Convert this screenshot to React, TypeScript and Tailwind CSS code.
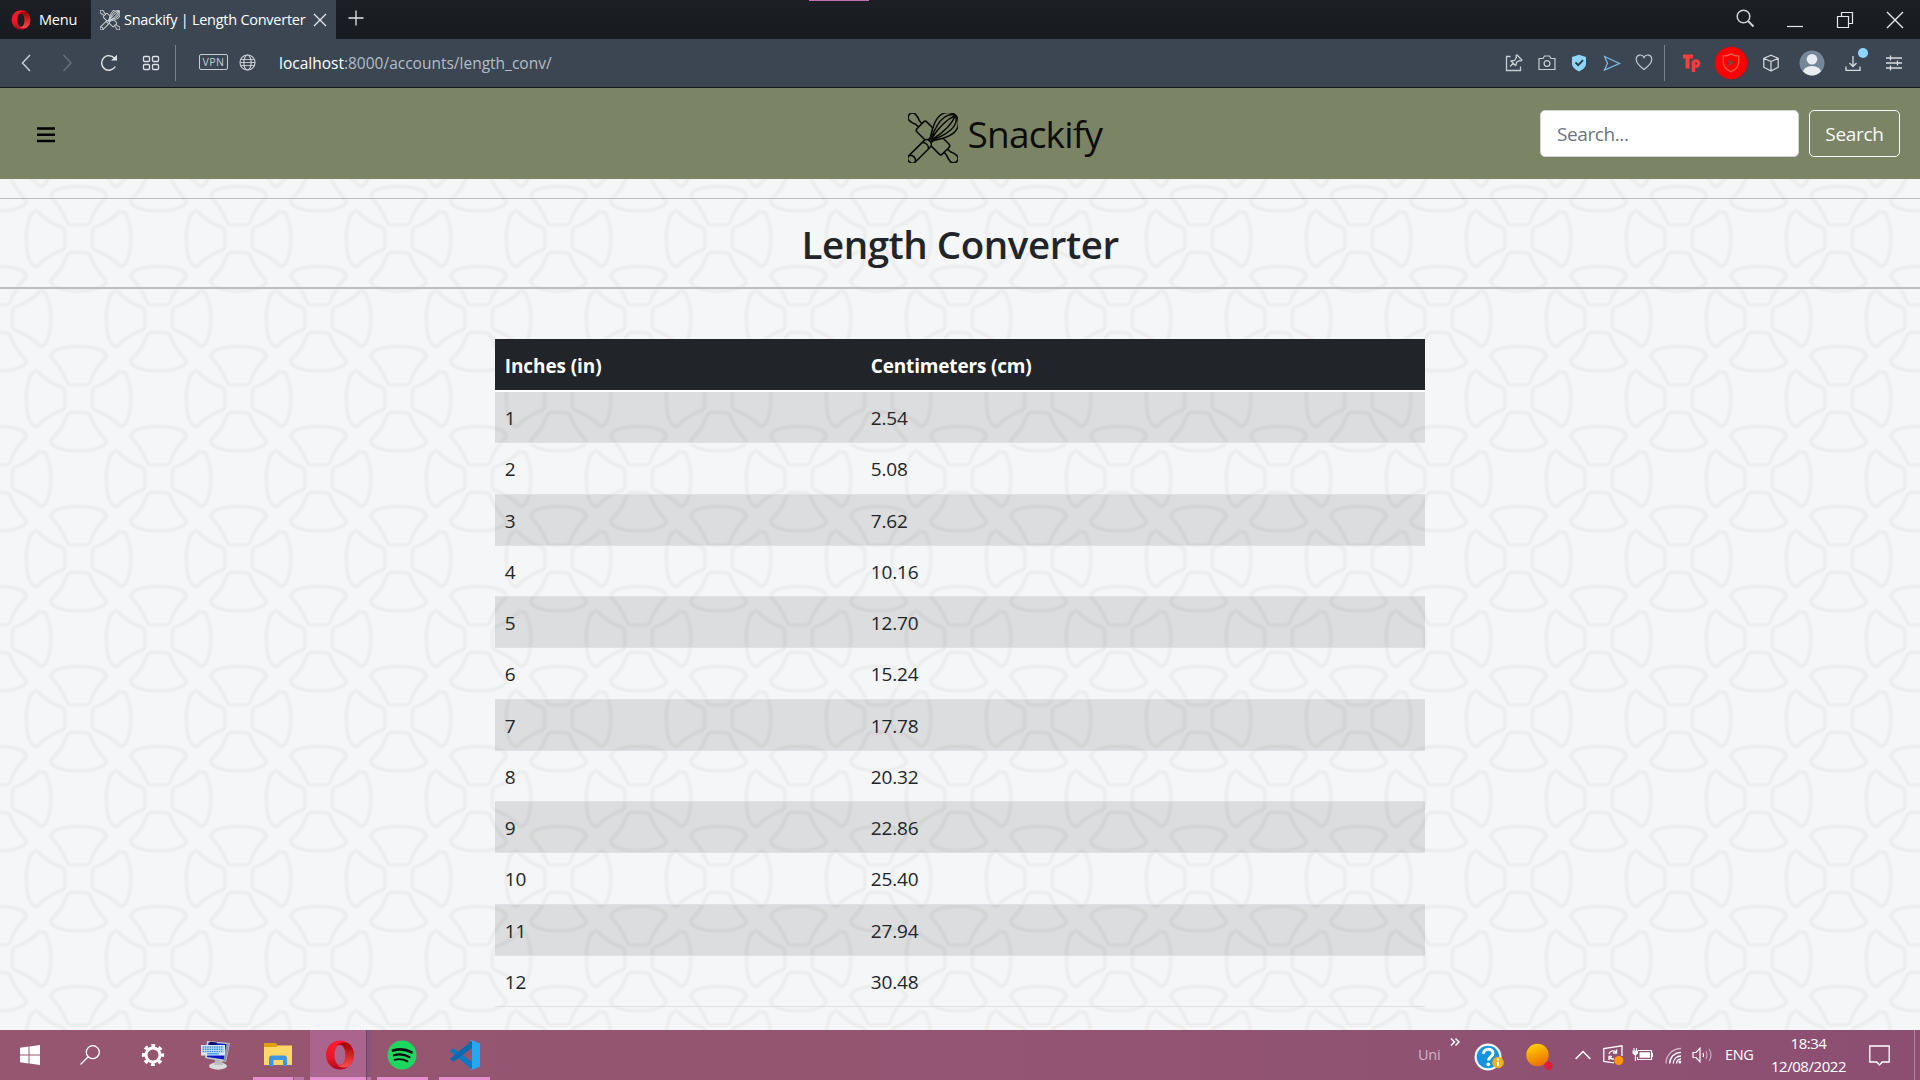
import React from "react";

const rows: [string, string][] = [
  ["1", "2.54"],
  ["2", "5.08"],
  ["3", "7.62"],
  ["4", "10.16"],
  ["5", "12.70"],
  ["6", "15.24"],
  ["7", "17.78"],
  ["8", "20.32"],
  ["9", "22.86"],
  ["10", "25.40"],
  ["11", "27.94"],
  ["12", "30.48"],
];

function Logo({ className, cover, stroke }: { className: string; cover: string; stroke: number }) {
  return (
    <svg viewBox="0 0 50 50" className={className} fill={cover} stroke="currentColor" strokeWidth={stroke} strokeLinejoin="round" strokeLinecap="round">
      <g transform="rotate(45 25 25)">
        <path d="M7 22.8 L3 22.4 C0 21 -2 20.6 -4 20.6 a4.4 4.4 0 0 0 0 8.8 C-2 29.4 0 29 3 27.6 L7 27.2" />
        <path d="M43 22.8 L47 22.4 C50 21 52 20.6 54 20.6 a4.4 4.4 0 0 1 0 8.8 C52 29.4 50 29 47 27.6 L43 27.2" />
        <rect x="7" y="18" width="36" height="14" rx="2.5" />
      </g>
      <g transform="rotate(-45 25 25)">
        <path d="M22.500 23.500 C29 19.500 36 14 44 14 C52 14 57 19.500 57 25 C57 30.500 52 36 44 36 C36 36 29 30.500 22.500 26.500 Z" />
        <path d="M22.500 24 C32 20 41 16.800 48 18.400 C53 19.600 56 22.500 56.500 25 M22.500 26 C32 30 41 33.200 48 31.600 C53 30.400 56 27.500 56.500 25 M22.500 24.600 C34 22 47 20.700 56.500 25 M22.500 25.400 C34 28 47 29.300 56.500 25" fill="none" />
        <rect x="-8.500" y="20.500" width="29" height="9" rx="4" />
        <path d="M20.500 23h4v4h-4M-4 20.800c3 2 3 6.400 0 8.400M14.500 20.800c2.200 2.400 2.200 6 0 8.400" fill="none" />
      </g>
    </svg>
  );
}

function OperaMark({ className, id }: { className: string; id: string }) {
  return (
    <svg viewBox="0 0 30 30" className={className}>
      <defs>
        <linearGradient id={id + "a"} x1="0" y1="0" x2="0" y2="1">
          <stop offset="0" stopColor="#ff1b2d" />
          <stop offset="0.6" stopColor="#ed1528" />
          <stop offset="1" stopColor="#b0071b" />
        </linearGradient>
        <linearGradient id={id + "b"} x1="0" y1="0" x2="0" y2="1">
          <stop offset="0" stopColor="#9c0000" />
          <stop offset="1" stopColor="#ff4b4b" />
        </linearGradient>
      </defs>
      <path fillRule="evenodd" fill={`url(#${id}a)`} d="M15 .5C7 .5 1 6.800 1 15s6 14.500 14 14.500S29 23.200 29 15 23 .5 15 .5Zm0 4.500c3.400 0 5.500 4.400 5.500 10S18.400 25 15 25 9.500 20.600 9.500 15 11.600 5 15 5Z" />
      <path fill={`url(#${id}b)`} d="M11.500 5.200C14.500 2.500 19 2 23.300 3.200 27 6 29 10.300 29 15s-2 9-5.700 11.800c-4.300 1.200-8.800.7-11.800-2 1 .5 2.200.7 3.500.5 3.400-.2 5.600-4.700 5.600-10.300S18.400 4.900 15 4.700c-1.300-.2-2.500 0-3.500.5Z" />
    </svg>
  );
}

function TabBar() {
  return (
    <div className="relative flex h-[39px] items-stretch bg-linear-to-b from-[#1c2024] to-[#171a1e] text-white">
      <div className="absolute top-0 left-[809px] h-px w-[60px] bg-[#c06fae]" />
      <div className="flex w-[91px] items-center pl-[11px]">
        <OperaMark id="menu" className="h-5 w-5" />
        <span className="ml-2 pt-px text-[14.5px] tracking-[-0.2px]">Menu</span>
      </div>
      <div className="flex w-[245px] items-center bg-[#3b4652] pl-[9px]">
        <Logo className="h-5 w-5 text-[#c9ced3]" cover="#3b4652" stroke={2.4} />
        <span className="ml-[4px] w-[182px] text-[14.500px] tracking-[-0.260px] whitespace-nowrap">Snackify | Length Converter</span>
        <svg viewBox="0 0 14 14" className="ml-[7px] h-[14px] w-[14px]" stroke="#e6e8ea" strokeWidth="1.3"><path d="M1 1l12 12M13 1L1 13" /></svg>
      </div>
      <svg viewBox="0 0 16 16" className="mt-[10px] ml-[12px] h-4 w-4" stroke="#e6e8ea" strokeWidth="1.3"><path d="M8 0.500v15M.5 8h15" /></svg>
      <div className="ml-auto flex items-center pr-[16px]">
        <svg viewBox="0 0 20 20" className="mb-[1px] h-5 w-5" fill="none" stroke="#d0d3d6" strokeWidth="1.500"><circle cx="8.500" cy="7.500" r="6.300" /><path d="M13 12l5.500 5.500" strokeWidth="2" /></svg>
        <svg viewBox="0 0 16 16" className="ml-[32px] h-4 w-4" stroke="#e6e8ea" strokeWidth="1.200"><path d="M0 14.500h16" /></svg>
        <svg viewBox="0 0 18 18" className="ml-[33px] h-[18px] w-[18px]" fill="none" stroke="#e6e8ea" strokeWidth="1.200"><path d="M1.500 5.500h11v11h-11zM5.500 5.500v-4h11v11h-4" /></svg>
        <svg viewBox="0 0 18 18" className="ml-[32px] h-[18px] w-[18px]" stroke="#e6e8ea" strokeWidth="1.400"><path d="M1 1l16 16M17 1L1 17" /></svg>
      </div>
    </div>
  );
}

function AddressBar() {
  return (
    <div className="flex h-[49px] items-center border-b border-[#15181c] bg-[#3b4652] text-[#c6cdd3]">
      <svg viewBox="0 0 16 18" className="ml-[18px] h-[18px] w-4" fill="none" stroke="currentColor" strokeWidth="1.500"><path d="M12 1L4.500 9l7.500 8" /></svg>
      <svg viewBox="0 0 16 18" className="ml-[25px] h-[18px] w-4 text-[#66717c]" fill="none" stroke="currentColor" strokeWidth="1.500"><path d="M4.500 1L12 9l-7.500 8" /></svg>
      <svg viewBox="0 0 18 18" className="ml-[25px] h-[18px] w-[18px]" fill="none" stroke="#dde1e5" strokeWidth="1.500"><path d="M15.300 12.500A7.300 7.300 0 1 1 14.500 4.200" /><path d="M11 6.500h6V.8z" fill="#dde1e5" stroke="none" /></svg>
      <svg viewBox="0 0 18 18" className="ml-[24px] h-[18px] w-[18px]" fill="none" stroke="#dde1e5" strokeWidth="1.300"><rect x="1.500" y="2.500" width="6" height="5" rx="1" /><rect x="10.500" y="2.500" width="6" height="5" rx="1" /><rect x="1.500" y="10.500" width="6" height="5" rx="1" /><rect x="10.500" y="10.500" width="6" height="5" rx="1" /></svg>
      <div className="ml-[15px] h-9 w-px bg-[#76818b]" />
      <div className="mb-[2px] ml-[23px] flex h-4 w-[29px] items-center justify-center rounded-[2px] border border-[#c6cdd3] text-[10.500px] leading-none tracking-[0.5px]">VPN</div>
      <svg viewBox="0 0 17 17" className="mb-[2px] ml-[11px] h-[17px] w-[17px]" fill="none" stroke="currentColor" strokeWidth="1.200"><circle cx="8.500" cy="8.500" r="7.500" /><ellipse cx="8.500" cy="8.500" rx="3.700" ry="7.500" /><path d="M2 5.500h13M2 11.500h13M1 8.500h15" strokeWidth="0.9" /></svg>
      <div className="ml-[23px] pt-[2px] text-[15.500px] text-[#b4bdc6]"><span className="text-white">localhost</span>:8000/accounts/length_conv/</div>

      <div className="ml-auto flex items-center pr-[17px]">
        <svg viewBox="0 0 18 18" className="h-[18px] w-[18px]" fill="none" stroke="currentColor" strokeWidth="1.300"><path d="M5.500 2.500h-4v14h14v-4M5 12.500l3.500-3.500M5.500 6.500l5.500 5.500M6.500 7l3-.5 2-3L11 2l1-1 5 5-1 1-1.500-.5-3 2-.5 3" /></svg>
        <svg viewBox="0 0 18 18" className="ml-[15px] h-[18px] w-[18px]" fill="none" stroke="currentColor" strokeWidth="1.200"><path d="M1 4.500h4l1.500-2.500h5L13 4.500h4v11H1z" /><circle cx="9" cy="9.500" r="2.900" /></svg>
        <svg viewBox="0 0 16 18" className="ml-[15px] h-[18px] w-4"><path d="M8 .7L15 3v6.500c0 4-3.500 6.300-7 8-3.500-1.700-7-4-7-8V3z" fill="#8fd6ff" /><path d="M4.500 8.500l2.700 2.700 4.800-5" fill="none" stroke="#2c3944" strokeWidth="1.800" /></svg>
        <svg viewBox="0 0 18 18" className="ml-[16px] h-[18px] w-[18px]" fill="none" stroke="#7cc0ea" strokeWidth="1.200"><path d="M1.500 2.500L16.500 9.500 1.500 16 4.500 9.300z" /></svg>
        <svg viewBox="0 0 18 18" className="mb-[3px] ml-[14px] h-[18px] w-[18px]" fill="none" stroke="currentColor" strokeWidth="1.200"><path d="M9 16.500C5 13.500 1.200 10.500 1.200 6.500c0-5 6-6 7.800-2 1.800-4 7.800-3 7.800 2 0 4-3.800 7-7.800 10z" /></svg>
        <div className="ml-[11px] h-9 w-px bg-[#76818b]" />
        <svg viewBox="0 0 20 20" className="ml-[17px] h-5 w-5" fill="none" stroke="#f43f3a" strokeWidth="4"><path d="M1 3.500h10M5.500 3v12.500" /><path d="M11.500 8v11" strokeWidth="3.400" /><circle cx="14" cy="10.500" r="2.800" strokeWidth="3" /></svg>
        <div className="ml-[12px] flex h-[32px] w-[34px] items-center justify-center"><div className="flex h-[32px] w-[32px] items-center justify-center rounded-full bg-[#ff0000] shadow-[0_0_2px_#c01018]">
          <svg viewBox="0 0 20 20" className="h-5 w-5"><path d="M10 1.200c2.500 1.300 5 1.800 7.800 2v5.300c0 5-3.600 8.500-7.800 10.300C5.800 17 2.200 13.500 2.200 8.500V3.200c2.800-.2 5.300-.7 7.800-2z" fill="none" stroke="#ee5b50" strokeWidth="1.300" /><path d="M7.500 6.500v6.500l5.500-3.200z" fill="#6d4a4a" /></svg>
        </div></div>
        <svg viewBox="0 0 18 18" className="ml-[14px] h-[18px] w-[18px]" fill="none" stroke="#d8dce0" strokeWidth="1.200" strokeLinejoin="round"><path d="M9 1.200l7.200 3v9L9 17l-7.200-3.800v-9zM1.800 4.200L9 7.500l7.200-3.300M9 7.500V17" /></svg>
        <svg viewBox="0 0 26 26" className="ml-[19px] h-[26px] w-[26px]"><defs><clipPath id="av"><circle cx="13" cy="13" r="12.500" /></clipPath></defs><circle cx="13" cy="13" r="12.500" fill="#768799" /><g clipPath="url(#av)" fill="#e8edf2"><circle cx="13" cy="9.300" r="5.300" /><ellipse cx="13" cy="22" rx="9" ry="6" /></g></svg>
        <div className="relative ml-[19px] h-[18px] w-[18px]">
          <svg viewBox="0 0 18 18" className="h-[18px] w-[18px]" fill="none" stroke="#d8dce0" strokeWidth="1.300"><path d="M9 2v10.500M5.500 9L9 12.500 12.500 9M2 12.500v3.800h14v-3.800" /></svg>
          <div className="absolute -top-[6px] left-[14px] h-[10px] w-[10px] rounded-full bg-[#8fd6ff]" />
        </div>
        <svg viewBox="0 0 18 18" className="ml-[23px] h-[18px] w-[18px]" stroke="#d8dce0" strokeWidth="1.300"><path d="M1 4h16M1 9h16M1 14h16M5.500 1.500v5M12.500 6.500v5M5.500 11.500v5" /></svg>
      </div>
    </div>
  );
}

function Navbar() {
  return (
    <div className="grid h-[91px] grid-cols-[1fr_auto_1fr] items-center bg-[#7c8466]">
      <svg viewBox="0 0 18 16" className="mt-[2px] ml-[37px] h-4 w-[18px]" stroke="#000" strokeWidth="2.600"><path d="M0 1.500h18M0 7.800h18M0 14h18" /></svg>
      <div className="flex items-center pl-[91px]">
        <Logo className="mt-[8px] h-[50px] w-[50px] text-[#0b0c09]" cover="#7c8466" stroke={1.6} />
        <span className="mb-px ml-[10px] w-[136px] text-[37px] leading-none tracking-[-0.8px] whitespace-nowrap text-[#0c0d0a]">Snackify</span>
      </div>
      <div className="flex justify-end pr-5">
        <div className="flex h-[47px] w-[259px] items-center rounded-[5px] border border-[#ced4da] bg-white pt-[2px] pl-4 text-[19px] tracking-[-0.400px] text-[#6c757d]">Search...</div>
        <div className="ml-[10px] flex h-[47px] w-[91px] items-center justify-center rounded-[5px] border border-[#f8f9fa] pt-[2px] text-[19px] tracking-[-0.300px] text-[#f8f9fa]">Search</div>
      </div>
    </div>
  );
}

function Backdrop() {
  const petal = "M-13 -20 C-11 -15 -10 -13.800 -6 -13.800 H6 C10 -13.800 11 -15 13 -20 C16 -28 20 -34 27.500 -41.500 Q28 -44.500 25 -47 C14 -54 -14 -54 -25 -47 Q-28 -44.500 -27.500 -41.500 C-20 -34 -16 -28 -13 -20 Z";
  const turns = [0, 90, 180, 270];
  const centers = [[80, 80], [0, 0], [160, 0], [0, 160], [160, 160]];
  const shapes = centers.map(([x, y]) =>
    turns.map((t) => <path key={`${x}-${y}-${t}`} d={petal} transform={`translate(${x} ${y}) rotate(${t})`} />)
  );
  return (
    <svg className="absolute inset-0 h-full w-full">
      <defs>
        <pattern id="weave" width="160" height="160" patternUnits="userSpaceOnUse" x="78.500" y="59.700">
          <g fill="none" stroke="#f1f2f3" strokeWidth="5" strokeLinejoin="round">{shapes}</g>
          <g fill="none" stroke="#ecedec" strokeWidth="2.600" strokeLinejoin="round">{shapes}</g>
        </pattern>
      </defs>
      <rect width="100%" height="100%" fill="#f4f6f8" />
      <rect width="100%" height="100%" fill="url(#weave)" />
    </svg>
  );
}

function Page() {
  return (
    <div className="relative min-h-0 flex-1 overflow-hidden text-[#212529]">
      <Backdrop />
      <div className="relative flex flex-col">
        <div className="mt-[19px] h-px bg-[#bdbfc0]" />
        <h1 className="flex h-[88px] items-center justify-center pt-[2px] text-[38.500px] leading-none font-semibold tracking-[-0.450px]">Length Converter</h1>
        <div className="h-[2px] bg-[#bbbdbe]" />
        <table className="mt-[49.500px] ml-[494.800px] w-[930px] table-fixed border-collapse text-left text-[19px] leading-none tracking-[-0.150px]">
          <thead>
            <tr className="h-[52px] border-b-2 border-white bg-[#212529] text-white">
              <th className="w-[366px] pt-[5px] pl-[10px] font-bold tracking-[-0.100px]">Inches (in)</th>
              <th className="pt-[5px] pl-[10px] font-bold tracking-[-0.170px]">Centimeters (cm)</th>
            </tr>
          </thead>
          <tbody>
            {rows.map(([a, b]) => (
              <tr key={a} className="h-[51.250px] border-b border-[#dee2e6] first:h-[52.250px] odd:bg-black/10">
                <td className="pt-[3px] pl-[10px]">{a}</td>
                <td className="pt-[3px] pl-[10px]">{b}</td>
              </tr>
            ))}
          </tbody>
        </table>
      </div>
    </div>
  );
}

function Taskbar() {
  return (
    <div className="flex h-[50px] items-stretch bg-linear-to-r from-[#97566f] via-[#935571] to-[#8c4f72] text-white">
      <div className="flex items-center">
        <svg viewBox="0 0 20 20" className="ml-5 h-5 w-5" fill="#fff"><path d="M0 2.800L8.500 1.600v8H0zM9.500 1.500L20 0v9.600H9.500zM0 10.500h8.500v8L0 17.300zM9.500 10.500H20V20L9.500 18.500z" /></svg>
        <svg viewBox="0 0 20 20" className="ml-10 h-5 w-5" fill="none" stroke="#fff" strokeWidth="1.300"><circle cx="12.800" cy="7.200" r="6.500" /><path d="M8.200 11.800L.5 19.500" /></svg>
        <svg viewBox="0 0 24 24" className="ml-[41px] h-6 w-6" fill="none" stroke="#fff"><circle cx="12" cy="12" r="7" strokeWidth="3" /><circle cx="12" cy="12" r="9.600" strokeWidth="3" strokeDasharray="3.770 3.770" strokeDashoffset="1.900" /></svg>
        <svg viewBox="0 0 30 30" className="mb-px ml-[36px] h-[30px] w-[30px]"><path d="M6 1l23 2-4 19L4 18z" fill="#c9cdd2" /><path d="M7.500 2.500l18.500 1.500-3 15.500L6 17z" fill="#0a18c8" /><path d="M9 1.800l7 .6-1 3.600H8z" fill="#0a1266" /><path d="M25.500 3.500l3-.5-4 19-2-1z" fill="#8f959c" /><ellipse cx="17" cy="26" rx="9" ry="3.700" fill="#d9dcdc" /><path d="M14 20l7 1 1 4h-9z" fill="#b9bdbe" /><rect x="0" y="5" width="24" height="10.500" fill="#dbe9f7" /><path d="M1.500 7h21M1.500 9.300h21M1.500 11.500h21" stroke="#3a8fd8" strokeWidth="1.500" strokeDasharray="1.700 .6" /><path d="M6 13.800h12" stroke="#3a8fd8" strokeWidth="1.200" /></svg>
      </div>
      <div className="ml-[22px] flex w-[51px] flex-col items-center">
        <svg viewBox="0 0 28 24" className="mt-[13px] mr-[2px] h-6 w-7"><path d="M0 0h11.500l2 2v3H0z" fill="#e0a106" /><path d="M0 4h12l2-1.500h14V22H0z" fill="#ffd766" /><path d="M5 23V15.500q0-3 3-3h12q3 0 3 3V23h-4v-6H9.500v6z" fill="#3b97e3" /></svg>
        <div className="mt-auto flex h-[3px] w-full"><div className="w-10 bg-[#e48fce]" /><div className="ml-px flex-1 bg-[#b877a7]" /></div>
      </div>
      <div className="ml-[6px] flex w-[56px] flex-col items-center bg-[#a9658e]">
        <OperaMark id="task" className="mt-[10px] ml-[3px] h-[30px] w-[30px]" />
        <div className="mt-auto h-[3px] w-full bg-[#e48fce]" />
      </div>
      <div className="flex w-[5px] flex-col border-l border-[#6d4460] bg-[#8b557a]"><div className="mt-auto h-[3px] bg-[#b877a7]" /></div>
      <div className="ml-[6px] flex w-[51px] flex-col items-center">
        <svg viewBox="0 0 30 30" className="mt-[10px] mr-px h-[30px] w-[30px]"><circle cx="15" cy="15" r="14.500" fill="#1ed760" /><g fill="none" stroke="#0a0a0a" strokeLinecap="round"><path d="M6 10.500c6-1.700 13-1.200 18.500 1.800" strokeWidth="2.700" /><path d="M6.800 15.300c5-1.500 11-.9 15.700 1.800" strokeWidth="2.200" /><path d="M7.500 19.800c4.300-1.200 9-.7 13 1.600" strokeWidth="1.800" /></g></svg>
        <div className="mt-auto h-[3px] w-full bg-[#e48fce]" />
      </div>
      <div className="ml-[11px] flex w-[51px] flex-col items-center">
        <svg viewBox="0 0 30 30" className="mt-[10px] h-[30px] w-[30px]"><path d="M.6 10.500L2.500 8.800q.8-.6 1.700 0L22 22v7.500L.8 12q-.8-.8-.2-1.500z" fill="#0b78c4" /><path d="M.6 19.500l1.900 1.700q.8.600 1.700 0L22 8V.5L.8 18q-.8.800-.2 1.500z" fill="#0a6bb0" /><path d="M21.500 0L30 3.500v23L21.500 30q-1.200 0-2-1 2 .8 2.500-1V2q-.5-1.800-2.500-1 .8-1 2-1z" fill="#25a8f2" /></svg>
        <div className="mt-auto h-[3px] w-full bg-[#e48fce]" />
      </div>

      <div className="ml-auto flex items-center">
        <span className="mr-[8px] w-6 text-[14.500px] tracking-[-0.200px] text-[#d3b4c4]">Uni</span>
        <svg viewBox="0 0 10 8" className="mb-[26px] h-2 w-[10px]" fill="none" stroke="#fff" strokeWidth="1.500"><path d="M1 .5L4.500 4 1 7.500M5.500 .5L9 4 5.500 7.500" /></svg>
        <svg viewBox="0 0 30 28" className="mt-[3px] ml-[14px] h-7 w-[30px]"><circle cx="14" cy="14" r="13.500" fill="#fff" /><circle cx="14" cy="14" r="11.300" fill="#1494dc" /><path d="M9.500 10.800c0-6 9.500-5.800 9.500-.6 0 3.300-4.500 3.500-4.500 7.300" fill="none" stroke="#fff" strokeWidth="3" /><circle cx="14.300" cy="21.300" r="1.900" fill="#fff" /><circle cx="24" cy="19.500" r="5.800" fill="#f2b01e" /><path d="M24 18.500v4.500M24 15.800v1.600" stroke="#fff" strokeWidth="1.800" /></svg>
        <svg viewBox="0 0 28 28" className="mt-[2px] ml-[21px] h-7 w-7"><defs><linearGradient id="orb" x1=".3" y1="0" x2=".7" y2="1"><stop offset="0" stopColor="#ffd100" /><stop offset="1" stopColor="#ec6a06" /></linearGradient></defs><circle cx="12.500" cy="13" r="11.200" fill="url(#orb)" /><circle cx="23.500" cy="23.700" r="4.200" fill="#e01b3c" /></svg>
        <svg viewBox="0 0 16 10" className="ml-[22px] h-[10px] w-4" fill="none" stroke="#fff" strokeWidth="1.500"><path d="M.6 9L8 1.500 15.400 9" /></svg>
        <svg viewBox="0 0 21 20" className="ml-[12px] h-5 w-[21px]" fill="none" stroke="#fff" strokeWidth="1.300"><path d="M19 11V.8L.8 3.500v13L11 17.800M13.500 7.500A4.300 4.300 0 0 0 6 9M6 11.500a4.300 4.300 0 0 0 5 2.300M13.500 4.500v3.500h-3.500M6 15v-3.500h3" /><circle cx="15.800" cy="15.500" r="4.500" fill="#ff9800" stroke="none" /></svg>
        <svg viewBox="0 0 21 14" className="ml-[8px] h-[14px] w-[21px]"><path d="M6 2.500h13.500v9H5.500V9" fill="none" stroke="#fff" strokeWidth="1.200" /><path d="M7.500 4.300H18v5.500H7.500zM19.500 5H21v4h-1.500zM.5 2.500h5.500v3L4.200 7H2.300L.5 5.500zM1.500 0h1v3h-1zM4 0h1v3H4zM2.800 6.500h1.200V13H2.800z" fill="#fff" /></svg>
        <svg viewBox="0 0 17 17" className="ml-[12px] h-[17px] w-[17px]" fill="none" stroke="#fff" strokeWidth="1.300"><path d="M1 16.500A15 15 0 0 1 16 1.500" opacity=".6" /><path d="M4.700 16.500A11.300 11.300 0 0 1 16 5.300M8.300 16.500A7.500 7.500 0 0 1 16 9" /><path d="M11.500 16.500a4.500 4.500 0 0 1 4.500-4.500" /><circle cx="14.800" cy="15" r="1.500" fill="#fff" stroke="none" /></svg>
        <svg viewBox="0 0 22 16" className="ml-[10px] h-4 w-[22px]" fill="none" stroke="#fff" strokeWidth="1.200"><path d="M1 5.500h3l4-4.300v13.600l-4-4.300H1zM11 6q1 2 0 4" /><path d="M13.800 4q2.400 4 0 8M17 2q4 6 0 12" opacity=".5" /></svg>
        <span className="ml-[11px] w-[30px] text-[14.500px] tracking-[-0.400px]">ENG</span>
        <div className="mb-px ml-[15px] flex w-[77px] flex-col items-center text-[15px] leading-[23px] tracking-[-0.450px]"><span>18:34</span><span>12/08/2022</span></div>
        <svg viewBox="0 0 21 21" className="ml-[22px] h-[21px] w-[21px]" fill="none" stroke="#fff" strokeWidth="1.300"><path d="M.8 1h19.400v16h-7l-2.700 3-2.700-3h-7z" /></svg>
        <div className="mr-[5px] ml-[24px] h-[50px] w-px bg-[#b487a0]" />
      </div>
    </div>
  );
}

export default function App() {
  return (
    <div className="flex h-[1080px] w-[1920px] flex-col overflow-hidden font-['Open_Sans',sans-serif]">
      <TabBar />
      <AddressBar />
      <Navbar />
      <Page />
      <Taskbar />
    </div>
  );
}
